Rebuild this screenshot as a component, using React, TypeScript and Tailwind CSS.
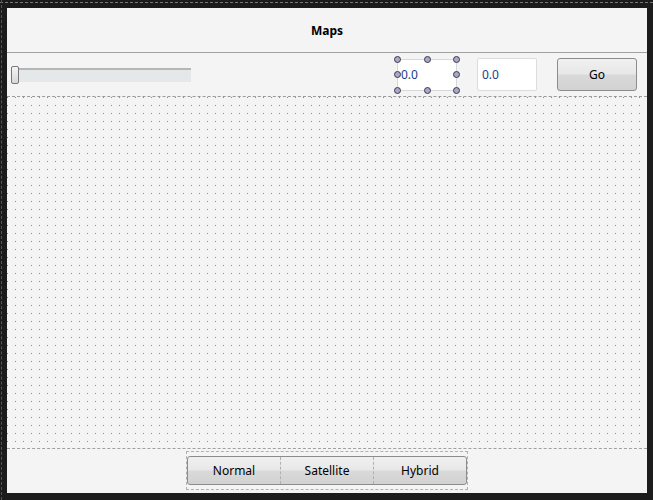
import React from 'react';

const Handle = ({ className }: { className: string }) => (
  <span
    className={`absolute w-[7px] h-[7px] rounded-full bg-[#a8a8c8] border border-[#3a3a4a] ${className}`}
  />
);

export default function App() {
  return (
    <div
      className="w-[653px] h-[500px] bg-[#1c1c1c] pl-[7px] pr-[6px] pt-[8px] pb-[7px] relative"
      style={{ fontFamily: '"Noto Sans", "Open Sans", sans-serif' }}
    >
      {/* dashed strips of the frame */}
      <div className="absolute left-0 right-0 top-[2px] border-t border-dashed border-[#777]" />
      <div className="absolute top-0 bottom-0 left-[1px] border-l border-dashed border-[#555]" />

      <div className="w-full h-full bg-[#f4f4f4] flex flex-col">
        {/* title */}
        <div className="h-[45px] pt-[2px] flex items-center justify-center border-b border-[#a0a0a0]">
          <span className="text-[12px] font-bold text-black">Maps</span>
        </div>

        {/* toolbar */}
        <div className="h-[44px] flex items-center border-b border-dashed border-[#9a9a9a]">
          {/* slider */}
          <div className="ml-[5px] relative w-[179px] h-[14px] mt-[1px] bg-[#e5e8e9] border-t-2 border-[#b5b5b5]">
            <div className="absolute left-[-1px] top-[-4px] w-[8px] h-[18px] rounded-[2px] border border-[#777] bg-[linear-gradient(#f4f4f4,#d8d8d8)]" />
          </div>

          {/* selected field */}
          <div className="ml-[206px] relative w-[60px] h-[32px] mt-[1px] bg-white border border-[#d8d8d8] flex items-center pl-[3px]">
            <span className="text-[12px] text-[#1a3d8f]">0.0</span>
            <Handle className="left-[-4px] top-[-4px]" />
            <Handle className="left-[26px] top-[-4px]" />
            <Handle className="right-[-4px] top-[-4px]" />
            <Handle className="left-[-4px] top-[11px]" />
            <Handle className="right-[-4px] top-[11px]" />
            <Handle className="left-[-4px] bottom-[-4px]" />
            <Handle className="left-[26px] bottom-[-4px]" />
            <Handle className="right-[-4px] bottom-[-4px]" />
          </div>

          {/* second field */}
          <div className="ml-[20px] w-[60px] h-[33px] bg-white border border-[#dcdcdc] rounded-[2px] flex items-center pl-[4px]">
            <span className="text-[12px] text-[#1a3d8f]">0.0</span>
          </div>

          {/* go button */}
          <button className="ml-[20px] w-[80px] h-[33px] rounded-[3px] border border-[#8c8c8c] bg-[linear-gradient(#f0f0f0_0%,#e8e8e8_48%,#d9d9d9_52%,#d2d2d2_100%)] text-[12px] text-black flex items-center justify-center">
            Go
          </button>
        </div>

        {/* map area */}
        <div className="flex-1 border-b border-dashed border-[#a0a0a0] bg-[conic-gradient(at_1px_1px,transparent_270deg,#8a8a8a_0)] bg-[size:8px_8px] bg-[position:0px_0px]" />

        {/* bottom bar */}
        <div className="h-[44px] flex justify-center">
          <div className="mt-[2px] w-[282px] h-[39px] border border-dashed border-[#b0b0b0] flex flex-col">
            <div className="mt-[4px] h-[29px] flex rounded-[3px] border border-[#8c8c8c] overflow-hidden bg-[linear-gradient(#f0f0f0_0%,#e8e8e8_48%,#d9d9d9_52%,#d2d2d2_100%)]">
              <div className="flex-1 flex items-center justify-center text-[12px] text-black border-r border-dashed border-[#b0b0b0]">Normal</div>
              <div className="flex-1 flex items-center justify-center text-[12px] text-black border-r border-dashed border-[#b0b0b0]">Satellite</div>
              <div className="flex-1 flex items-center justify-center text-[12px] text-black">Hybrid</div>
            </div>
          </div>
        </div>
      </div>
    </div>
  );
}
